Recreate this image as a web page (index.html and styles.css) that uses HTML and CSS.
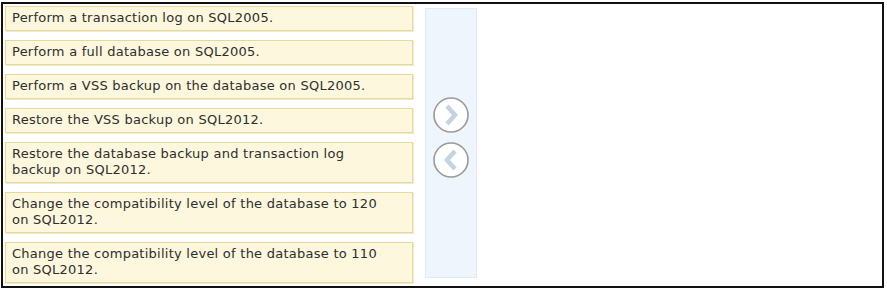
FILE: index.html
```html
<!DOCTYPE html>
<html lang="en">
<head>
    <meta charset="UTF-8">
    <title>Build List</title>
    <link rel="stylesheet" href="styles.css">
</head>
<body>
    <div class="question">
        <div class="source-list">
            <div class="item">Perform a transaction log on SQL2005.</div>
            <div class="item">Perform a full database on SQL2005.</div>
            <div class="item">Perform a VSS backup on the database on SQL2005.</div>
            <div class="item">Restore the VSS backup on SQL2012.</div>
            <div class="item">Restore the database backup and transaction log backup on SQL2012.</div>
            <div class="item">Change the compatibility level of the database to 120 on SQL2012.</div>
            <div class="item">Change the compatibility level of the database to 110 on SQL2012.</div>
        </div>

        <div class="mover">
            <button class="move-btn" title="Add">
                <svg width="38" height="38" viewBox="0 0 38 38">
                    <circle cx="19" cy="19" r="17" fill="#fff" stroke="#9a9a9a" stroke-width="1.6"/>
                    <path d="M15 10 L23 19 L15 28" fill="none" stroke="#c3d3e4" stroke-width="4.5" stroke-linejoin="miter"/>
                </svg>
            </button>
            <button class="move-btn" title="Remove">
                <svg width="38" height="38" viewBox="0 0 38 38">
                    <circle cx="19" cy="19" r="17" fill="#fff" stroke="#9a9a9a" stroke-width="1.6"/>
                    <path d="M23 10 L15 19 L23 28" fill="none" stroke="#c3d3e4" stroke-width="4.5" stroke-linejoin="miter"/>
                </svg>
            </button>
        </div>

        <div class="answer-list"></div>
    </div>
</body>
</html>
```

FILE: styles.css
```css
body {
    margin: 0;
    background: #fff;
    font-family: "DejaVu Sans", Verdana, sans-serif;
    font-size: 13px;
    letter-spacing: 0.25px;
    color: #2e2e2e;
}

.question {
    display: flex;
    align-items: flex-start;
    width: 879px;
    height: 282px;
    margin: 2px 0 0 1px;
    border: 2px solid #111;
    padding: 0;
}

.source-list {
    display: flex;
    flex-direction: column;
    gap: 9px;
    width: 408px;
    padding: 2px 0 0 2px;
}

.item {
    background: #fdf8dd;
    border: 1px solid #e6da99;
    padding: 3px 16px 4px 6px;
    line-height: 16px;
    box-shadow: 1px 1px 0 #f1ead0;
}

.mover {
    display: flex;
    flex-direction: column;
    align-items: center;
    justify-content: center;
    gap: 7px;
    width: 52px;
    height: 270px;
    margin: 4px 0 0 12px;
    background: #eef5fc;
    border: 1px solid #dfeaf6;
    padding-bottom: 12px;
    box-sizing: border-box;
}

.move-btn {
    border: 0;
    padding: 0;
    background: none;
    line-height: 0;
    cursor: pointer;
}

.answer-list {
    flex: 1;
}
```
